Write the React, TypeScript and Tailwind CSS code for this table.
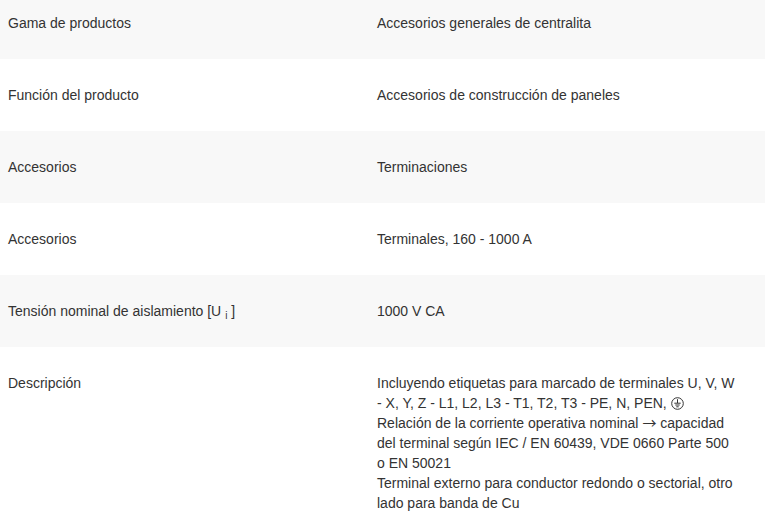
import React from "react";

const Earth = () => (
  <svg width="13" height="13" viewBox="0 0 13 13" className="inline-block align-[-2px]" fill="none" stroke="#333" strokeWidth="1">
    <circle cx="6.5" cy="6.5" r="5.8" />
    <line x1="6.5" y1="2.2" x2="6.5" y2="6" />
    <line x1="3.3" y1="6.2" x2="9.7" y2="6.2" />
    <line x1="4.3" y1="8" x2="8.7" y2="8" />
    <line x1="5.3" y1="9.8" x2="7.7" y2="9.8" />
  </svg>
);

const rows: { label: React.ReactNode; value: React.ReactNode }[] = [
  { label: "Gama de productos", value: "Accesorios generales de centralita" },
  { label: "Función del producto", value: "Accesorios de construcción de paneles" },
  { label: "Accesorios", value: "Terminaciones" },
  { label: "Accesorios", value: "Terminales, 160 - 1000 A" },
  {
    label: (
      <>
        Tensión nominal de aislamiento [U <sub className="text-[10px]">i</sub> ]
      </>
    ),
    value: "1000 V CA",
  },
  {
    label: "Descripción",
    value: (
      <>
        <div>
          Incluyendo etiquetas para marcado de terminales U, V, W - X, Y, Z - L1, L2, L3 - T1, T2, T3 - PE, N, PEN, <Earth />
        </div>
        <div>
          Relación de la corriente operativa nominal{" "}
          <span className="text-[14px] leading-[14px]" style={{ fontFamily: '"Noto Sans CJK JP", sans-serif' }}>
            →
          </span>{" "}
          capacidad del terminal según IEC / EN 60439, VDE 0660 Parte 500 o EN 50021
        </div>
        <div>Terminal externo para conductor redondo o sectorial, otro lado para banda de Cu</div>
      </>
    ),
  },
];

export default function App() {
  return (
    <div
      className="w-[770px] h-[527px] overflow-hidden bg-white text-[14px] leading-[20px] text-[#333333]"
      style={{ fontFamily: '"Liberation Sans", Arial, sans-serif' }}
    >
      <div className="w-[765px] -mt-[13px]">
        {rows.map((r, i) => (
          <div
            key={i}
            className={`flex py-[26px] ${i % 2 === 0 ? "bg-[#f8f8f8]" : "bg-white"}`}
          >
            <div className="w-[369px] pl-2 shrink-0">{r.label}</div>
            <div className="w-[361px] pl-[8px] box-content">{r.value}</div>
          </div>
        ))}
      </div>
    </div>
  );
}
